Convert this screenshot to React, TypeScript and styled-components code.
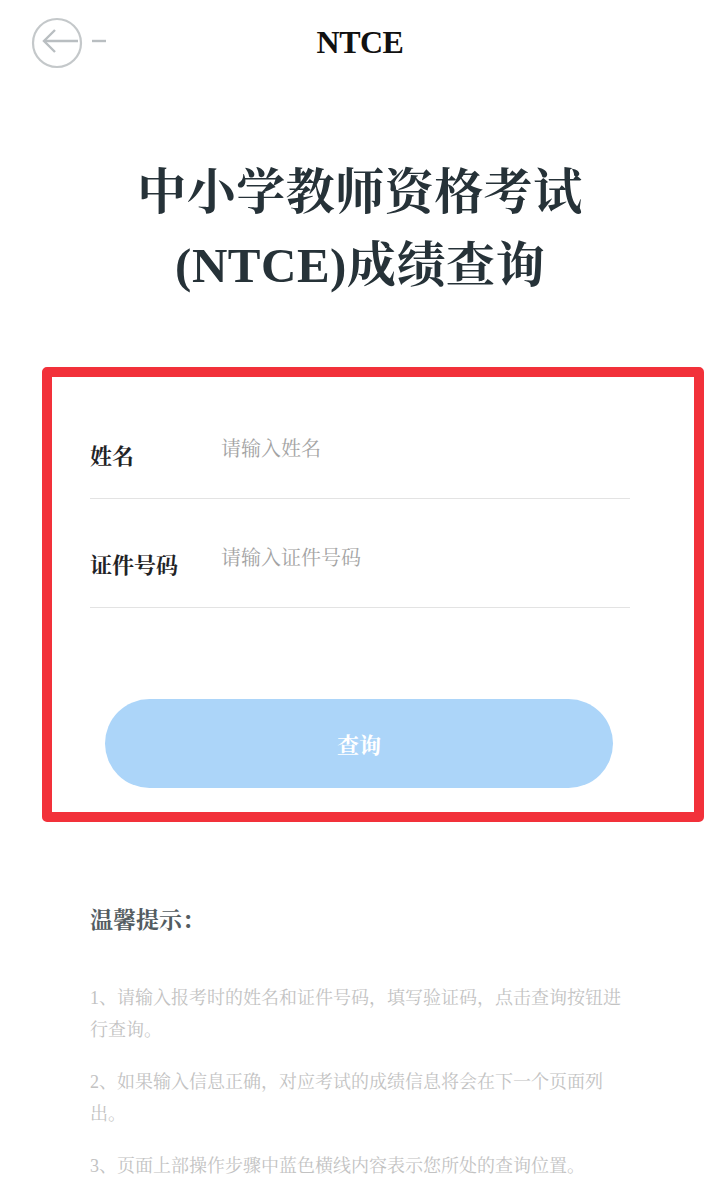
import styled, { createGlobalStyle } from "styled-components";

const GlobalStyle = createGlobalStyle`
  html, body {
    margin: 0;
    padding: 0;
    background: #ffffff;
  }
  body {
    font-family: "Liberation Serif", "Noto Serif CJK SC", "Noto Sans CJK SC", serif;
  }
`;

const tips = [
  "1、请输入报考时的姓名和证件号码，填写验证码，点击查询按钮进行查询。",
  "2、如果输入信息正确，对应考试的成绩信息将会在下一个页面列出。",
  "3、页面上部操作步骤中蓝色横线内容表示您所处的查询位置。",
];

const fields = [
  { label: "姓名", placeholder: "请输入姓名" },
  { label: "证件号码", placeholder: "请输入证件号码" },
];

function BackIcon() {
  return (
    <svg width="90" height="60" viewBox="0 0 90 60" fill="none">
      <circle cx="27" cy="30" r="24" stroke="#c4c8ca" strokeWidth="2.2" />
      <path d="M14 28 H48" stroke="#b9bec1" strokeWidth="2.4" />
      <path d="M25 17 L14 28 L25 39" stroke="#b9bec1" strokeWidth="2.4" />
      <path d="M62 28 H76" stroke="#b9bec1" strokeWidth="2.4" />
    </svg>
  );
}

export default function App() {
  return (
    <StyledPage>
      <GlobalStyle />
      <StyledHeader>
        <StyledBack>
          <BackIcon />
        </StyledBack>
        <StyledHeaderTitle>NTCE</StyledHeaderTitle>
        <span />
      </StyledHeader>

      <StyledTitle>
        中小学教师资格考试
        <br />
        (NTCE)成绩查询
      </StyledTitle>

      <StyledFormBox>
        {fields.map((field) => (
          <StyledFieldRow key={field.label}>
            <StyledLabel>{field.label}</StyledLabel>
            <StyledPlaceholder>{field.placeholder}</StyledPlaceholder>
          </StyledFieldRow>
        ))}
        <StyledButton type="button">查询</StyledButton>
      </StyledFormBox>

      <StyledTips>
        <StyledTipsTitle>温馨提示：</StyledTipsTitle>
        {tips.map((tip) => (
          <StyledTip key={tip}>{tip}</StyledTip>
        ))}
      </StyledTips>
    </StyledPage>
  );
}

const StyledPage = styled.div`
  width: 720px;
  min-height: 1198px;
  background: #ffffff;
  overflow: hidden;
`;

const StyledHeader = styled.header`
  display: grid;
  grid-template-columns: 1fr auto 1fr;
  align-items: center;
  height: 84px;
`;

const StyledBack = styled.div`
  display: flex;
  align-items: center;
  padding-left: 30px;
  padding-top: 2px;
`;

const StyledHeaderTitle = styled.div`
  font-family: "Liberation Serif", serif;
  font-weight: 700;
  font-size: 32px;
  color: #111111;
  letter-spacing: -0.5px;
`;

const StyledTitle = styled.h1`
  margin: 72px 0 0;
  text-align: center;
  font-size: 49px;
  line-height: 73px;
  font-weight: 700;
  color: #263238;
  letter-spacing: 0.5px;
`;

const StyledFormBox = styled.div`
  margin: 65px 0 0 42px;
  width: 662px;
  box-sizing: border-box;
  border: 10px solid #f2313a;
  border-radius: 5px;
  padding: 13px 64px 24px 38px;
  display: flex;
  flex-direction: column;
`;

const StyledFieldRow = styled.div`
  height: 109px;
  box-sizing: border-box;
  display: flex;
  align-items: flex-end;
  padding-bottom: 26px;
  border-bottom: 1.5px solid #e3e3e3;
`;

const StyledLabel = styled.div`
  width: 131px;
  font-size: 22px;
  line-height: 30px;
  font-weight: 700;
  color: #1f2326;
`;

const StyledPlaceholder = styled.div`
  font-size: 20px;
  line-height: 30px;
  color: #a3a3a3;
  margin-bottom: 8px;
`;

const StyledButton = styled.button`
  margin: 91px 0 0 15px;
  width: 508px;
  height: 89px;
  border: none;
  border-radius: 45px;
  background: #acd5f9;
  color: #ffffff;
  font-family: inherit;
  font-size: 22px;
  font-weight: 700;
  cursor: pointer;
`;

const StyledTips = styled.section`
  padding: 83px 90px 0;
  display: flex;
  flex-direction: column;
`;

const StyledTipsTitle = styled.div`
  font-size: 23px;
  line-height: 32px;
  font-weight: 700;
  color: #535c61;
  margin-bottom: 45px;
`;

const StyledTip = styled.p`
  margin: 0 0 20px;
  font-size: 18px;
  line-height: 32px;
  color: #c2c2c2;
  width: 540px;
`;
